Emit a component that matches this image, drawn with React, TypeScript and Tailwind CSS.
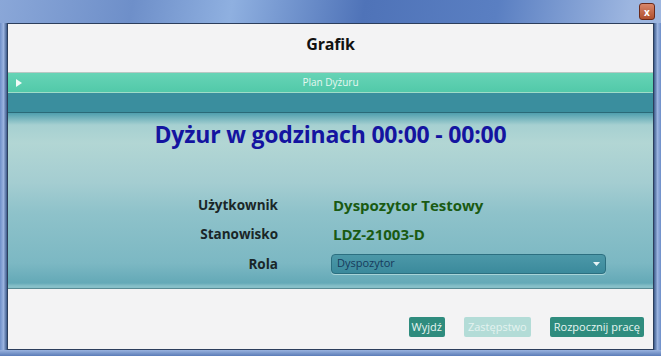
import React from "react";

export default function App() {
  const font = { fontFamily: '"Open Sans", "Noto Sans", sans-serif' };
  return (
    <div
      className="w-[661px] h-[356px] flex flex-col overflow-hidden bg-[linear-gradient(to_bottom,#7e9fd3,#5d82c0)]"
      style={font}
    >
      {/* Title bar */}
      <div className="h-[23px] flex items-start justify-end pr-[6px] pt-[3px] bg-[linear-gradient(100deg,#8aa7d8_0%,#6e8fc9_20%,#8fb0e0_35%,#4f73b8_55%,#5a7fc2_75%,#9db6e0_95%)]">
        <div className="w-[16px] h-[17px] rounded-[3px] border border-[#6a2a1a] bg-[linear-gradient(to_bottom,#d8866a,#b0502e)] flex items-center justify-center">
          <span className="text-[10px] leading-none font-bold text-white">x</span>
        </div>
      </div>
      <div className="flex-1 flex">
        <div className="w-[7px] bg-[linear-gradient(to_right,#6e8fc9,#9ab3df_50%,#3c5a8a)]" />
        <div className="flex-1 flex flex-col border border-[#2c3e5c] bg-[#f3f3f4]">
          {/* Header */}
          <div className="h-[48px] flex items-start justify-center pt-[8px] bg-[#f3f3f4]">
            <span className="text-[16px] font-bold text-[#111] tracking-[-0.2px]">Grafik</span>
          </div>
          {/* Green bar */}
          <div className="h-[21px] relative flex items-center justify-center border-t border-[#b8c8c4] bg-[linear-gradient(to_bottom,#66d4b6,#52c9a9)] border-b border-b-[#9fdcc8]">
            <svg className="absolute left-[8px] top-[6px]" width="6" height="8" viewBox="0 0 6 8">
              <path d="M0 0 L6 4 L0 8 Z" fill="#f2fbf8" />
            </svg>
            <span className="text-[10px] text-[#e6f7f1]">Plan Dyżuru</span>
          </div>
          {/* Dark teal bar */}
          <div className="h-[20px] bg-[#3a8e9e] border-b border-[#2a6a78]" />
          {/* Body */}
          <div className="h-[176px] flex flex-col items-center bg-[linear-gradient(to_bottom,#4f9fae_0px,#a6d0d1_12px,#b2d6d4_30px,#a4cdd1_70px,#8ec2ca_100px,#7cb8c3_150px,#64a9b7_170px,#86bfc8_173px,#86bfc8_175px,#2a5560_176px)]">
            <div className="mt-[4px] text-[23px] font-bold text-[#1414a0] tracking-[-0.2px]">
              Dyżur w godzinach 00:00 - 00:00
            </div>
            <div className="mt-[42px] w-full grid grid-cols-[270px_1fr] gap-x-[55px] gap-y-[7px] items-center">
              <div className="text-right text-[13.5px] font-bold text-[#1a2628] leading-[22px]">Użytkownik</div>
              <div className="text-[15px] font-bold text-[#1a5a12] leading-[22px]">Dyspozytor Testowy</div>
              <div className="text-right text-[13.5px] font-bold text-[#1a2628] leading-[22px]">Stanowisko</div>
              <div className="text-[15px] font-bold text-[#1a5a12] leading-[22px]">LDZ-21003-D</div>
              <div className="mt-[2px] text-right text-[13.5px] font-bold text-[#1a2628]">Rola</div>
              <div className="mt-[2px] -ml-[2px] w-[275px] h-[20px] rounded-[4px] border border-[#2c6f80] bg-[linear-gradient(to_bottom,#4c98a8,#3b8a9c)] shadow-[0_1px_0_#a8d4d8] flex items-center justify-between px-[5px]">
                <span className="text-[11px] text-[#163a5c]">Dyspozytor</span>
                <svg width="7" height="4" viewBox="0 0 7 4">
                  <path d="M0 0 L7 0 L3.5 4 Z" fill="#e8f4f6" />
                </svg>
              </div>
            </div>
          </div>
          {/* Footer */}
          <div className="flex-1 flex items-start justify-end gap-[19px] pt-[28px] pr-[9px] bg-[#f3f3f4]">
            <div className="h-[20px] px-[3px] rounded-[2px] bg-[#2f8c7e] flex items-center text-[11px] text-[#e8f6f2]">Wyjdź</div>
            <div className="h-[20px] px-[4px] rounded-[2px] bg-[#b3dcd7] flex items-center text-[11px] text-[#e4f3f0]">Zastępstwo</div>
            <div className="h-[20px] px-[4px] rounded-[2px] bg-[#2f8c7e] flex items-center text-[11px] text-[#e8f6f2]">Rozpocznij pracę</div>
          </div>
        </div>
        <div className="w-[7px] bg-[linear-gradient(to_right,#3c5a8a,#9ab3df_50%,#6e8fc9)]" />
      </div>
      <div className="h-[6px] bg-[linear-gradient(to_bottom,#9ab3df,#5b7cb8)]" />
    </div>
  );
}
